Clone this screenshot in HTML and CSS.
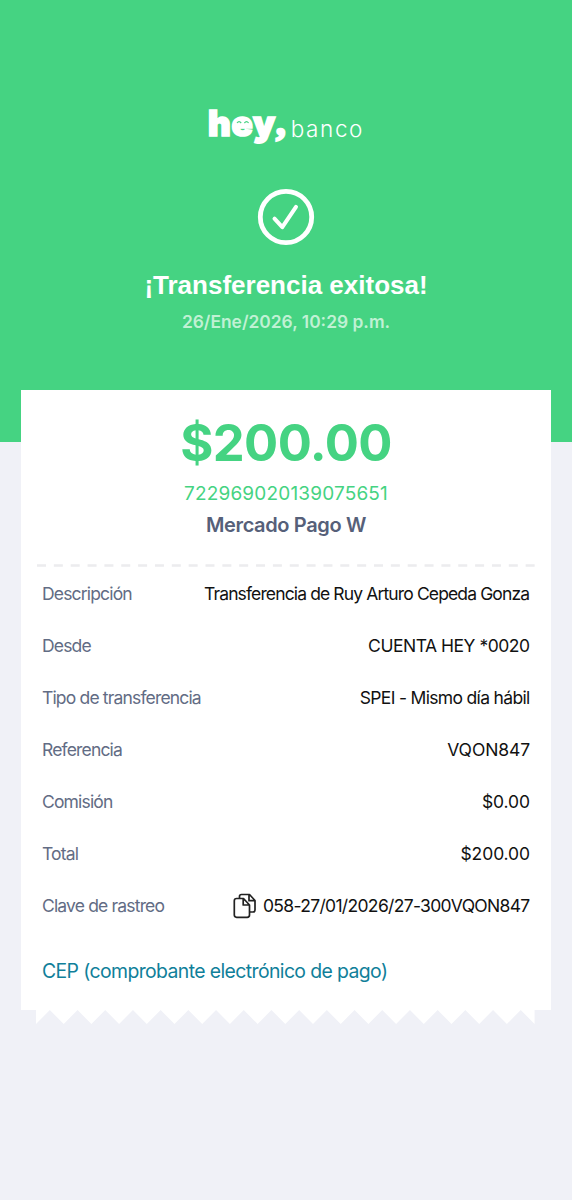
FILE: index.html
```html
<!DOCTYPE html>
<html lang="es">
<head>
<meta charset="utf-8">
<title>Transferencia exitosa</title>
<link rel="stylesheet" href="styles.css">
</head>
<body>
<main class="screen">
  <header class="hero">
    <div class="logo">
      <span class="logo-hey">hey</span><span class="logo-comma">,</span><span class="logo-banco">banco</span>
      <svg class="logo-smile" width="18" height="12" viewBox="0 0 18 12" fill="none"><path d="M3 2H14V8H3Z" fill="#fff"/><path d="M3 4Q5 1.4 7.2 4M10.4 4Q12.6 1.4 14.6 4" stroke="#45d382" stroke-width="1.2"/></svg>
    </div>
    <svg class="check" width="58" height="58" viewBox="0 0 58 58" fill="none" stroke="#fff" stroke-linecap="round" stroke-linejoin="round"><circle cx="29" cy="29" r="25.7" stroke-width="4.8"/><path d="M17.5 30.7L25.3 39.2L39 18.8" stroke-width="4"/></svg>
    <h1 class="title">¡Transferencia exitosa!</h1>
    <p class="date">26/Ene/2026, 10:29 p.m.</p>
  </header>
  <section class="receipt">
    <div class="amount">$200.00</div>
    <div class="account">722969020139075651</div>
    <div class="payee">Mercado Pago W</div>
    <svg class="divider" width="498" height="3" viewBox="0 0 498 3"><path d="M0 1.5H498" stroke="#ececee" stroke-width="2.4" stroke-dasharray="9 7.85"/></svg>
    <dl class="details">
      <div class="row"><dt>Descripción</dt><dd class="tight">Transferencia de Ruy Arturo Cepeda Gonza</dd></div>
      <div class="row"><dt>Desde</dt><dd class="caps">CUENTA HEY *0020</dd></div>
      <div class="row"><dt>Tipo de transferencia</dt><dd class="snug">SPEI - Mismo día hábil</dd></div>
      <div class="row"><dt>Referencia</dt><dd class="plain">VQON847</dd></div>
      <div class="row"><dt>Comisión</dt><dd class="plain">$0.00</dd></div>
      <div class="row"><dt>Total</dt><dd class="plain">$200.00</dd></div>
      <div class="row"><dt>Clave de rastreo</dt><dd class="tracking snug"><svg class="copy" width="24" height="26" viewBox="0 0 24 26" fill="none" stroke="#222" stroke-width="1.7" stroke-linejoin="round"><path d="M6.5 5.5V3.5Q6.5 1.5 8.5 1.5H16.5L22 7.5V17Q22 19 20 19H17M16 1.8V7.7H21.7"/><path d="M3.6 5.5H10.5L16.5 12V22Q16.5 24.3 14.2 24.3H3.6Q1.3 24.3 1.3 22V7.8Q1.3 5.5 3.6 5.5ZM10.2 5.8V12H16.2"/></svg><span>058-27/01/2026/27-300VQON847</span></dd></div>
    </dl>
    <a class="cep">CEP (comprobante electrónico de pago)</a>
  </section>
  <svg class="teeth" width="500" height="14" viewBox="0 0 500 14"><path id="teeth" fill="#fff" d=""/></svg>
</main>
<script src="teeth.js"></script>
</body>
</html>
```

FILE: styles.css
```css
* { box-sizing: border-box; margin: 0; padding: 0; }
body { background: #f0f1f7; font-family: Inter, "Liberation Sans", sans-serif; }
.screen { width: 572px; height: 1200px; overflow: hidden; background: linear-gradient(#45d382 442px, #f0f1f7 442px); }
.hero { height: 390px; padding-top: 101px; display: flex; flex-direction: column; align-items: center; color: #fff; }
.logo { position: relative; width: 156px; height: 44px; display: flex; align-items: baseline; line-height: 44px; white-space: nowrap; }
.logo-hey { width: 69px; font-size: 35px; font-weight: 900; letter-spacing: 0.8px; -webkit-text-stroke: 1.7px #fff; }
.logo-comma { width: 15.5px; font: 700 38px/44px "Liberation Serif", serif; -webkit-text-stroke: 2.6px #fff; transform: translateY(-1px); }
.logo-banco { font-size: 22.5px; font-weight: 350; letter-spacing: 1.6px; transform: translateY(0.5px); }
.logo-smile { position: absolute; left: 26px; top: 18px; }
.check { margin-top: 43px; }
.title { margin-top: 21px; font: 700 26px/36px "Liberation Sans", sans-serif; white-space: nowrap; }
.date { margin-top: 7px; font-size: 17.4px; line-height: 24px; font-weight: 600; color: #c0f1d4; }
.receipt { width: 530px; height: 620px; margin: 0 21px; padding: 20px 21px 0; background: #fff; display: flex; flex-direction: column; align-items: center; }
.amount { margin-top: 1px; font-size: 50.7px; line-height: 64px; font-weight: 650; letter-spacing: -0.6px; color: #45d382; }
.account { margin-top: 7px; font-size: 19px; line-height: 24px; letter-spacing: 0.17px; color: #45d382; }
.payee { margin-top: 6px; font-size: 20px; line-height: 26px; font-weight: 600; letter-spacing: -0.36px; color: #566079; }
.divider { flex: none; margin: 26px -10px 0; }
.details { width: 100%; margin-top: 1px; }
.row { height: 52px; display: flex; align-items: center; justify-content: space-between; font-size: 17.5px; line-height: 24px; white-space: nowrap; }
.row dt { color: #626c84; letter-spacing: -0.83px; }
.row dd { color: #111; }
.row .tight { letter-spacing: -0.87px; padding-right: 0.8px; }
.row .snug { letter-spacing: -0.67px; padding-right: 0.4px; }
.row .caps { letter-spacing: -0.48px; padding-right: 0.4px; }
.row .plain { letter-spacing: -0.1px; }
.tracking { display: flex; align-items: center; gap: 6px; }
.cep { align-self: flex-start; margin-top: 26px; font-size: 19.4px; line-height: 26px; letter-spacing: -0.6px; white-space: nowrap; color: #107f9a; }
.teeth { display: block; margin-left: 36px; }
```

FILE: teeth.js
```js
const step = 27.7, count = 18;
let d = "M0 0";
for (let i = 0; i < count; i++) {
  const x = i * step;
  d += `L${x} 14L${x + step / 2} 0`;
}
d += `L${count * step} 14V0Z`;
document.getElementById("teeth").setAttribute("d", d);
```
